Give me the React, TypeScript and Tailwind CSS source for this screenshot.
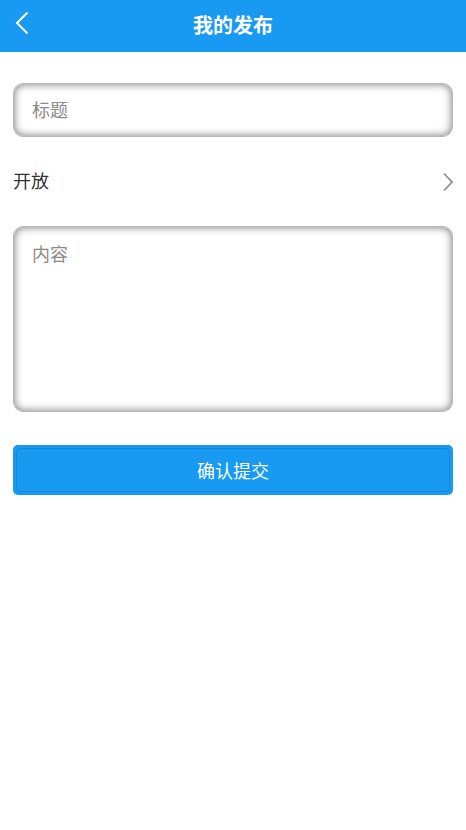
const font = { fontFamily: '"Liberation Sans", "Noto Sans CJK SC", sans-serif' };

export default function App() {
  return (
    <div className="min-h-[830px] w-full bg-white" style={font}>
      <header className="relative flex h-[52px] items-center justify-center bg-[#1899f2]">
        <button className="absolute left-[14px] top-[11px] text-white" aria-label="back">
          <svg width="16" height="24" viewBox="0 0 16 24" fill="none">
            <path d="M13.5 1.5 L3 12 L13.5 22.5" stroke="currentColor" strokeWidth="2" />
          </svg>
        </button>
        <h1 className="text-[20px] font-bold text-white">我的发布</h1>
      </header>

      <main className="flex flex-col px-[13px] pt-[31px]">
        <div className="flex h-[54px] items-center rounded-[10px] border border-[#b8b8b8] px-[18px] shadow-[inset_0_0_9px_rgba(0,0,0,0.55)]">
          <input
            placeholder="标题"
            className="w-full bg-transparent pt-[2px] text-[18px] text-[#333] outline-none placeholder:text-[#8a8a8a]"
          />
        </div>

        <div className="mt-[25px] flex h-[40px] items-center justify-between">
          <span className="text-[18px] text-[#333]">开放</span>
          <svg width="12" height="20" viewBox="0 0 12 20" fill="none" className="mr-[-1px] text-[#8c8c95]">
            <path d="M2 1.5 L10 10 L2 18.5" stroke="currentColor" strokeWidth="1.8" />
          </svg>
        </div>

        <div className="mt-[24px] h-[186px] rounded-[10px] border border-[#b8b8b8] px-[18px] pt-[14px] shadow-[inset_0_0_9px_rgba(0,0,0,0.55)]">
          <textarea
            placeholder="内容"
            className="h-full w-full resize-none bg-transparent text-[18px] leading-[28px] text-[#333] outline-none placeholder:text-[#8a8a8a]"
          />
        </div>

        <button className="mt-[33px] h-[50px] rounded-[5px] bg-[#1899f2] p-[3px]">
          <span className="flex h-full w-full items-center justify-center rounded-[4px] border border-[#1288dd] pt-[4px] text-[18px] text-white">
            确认提交
          </span>
        </button>
      </main>
    </div>
  );
}
